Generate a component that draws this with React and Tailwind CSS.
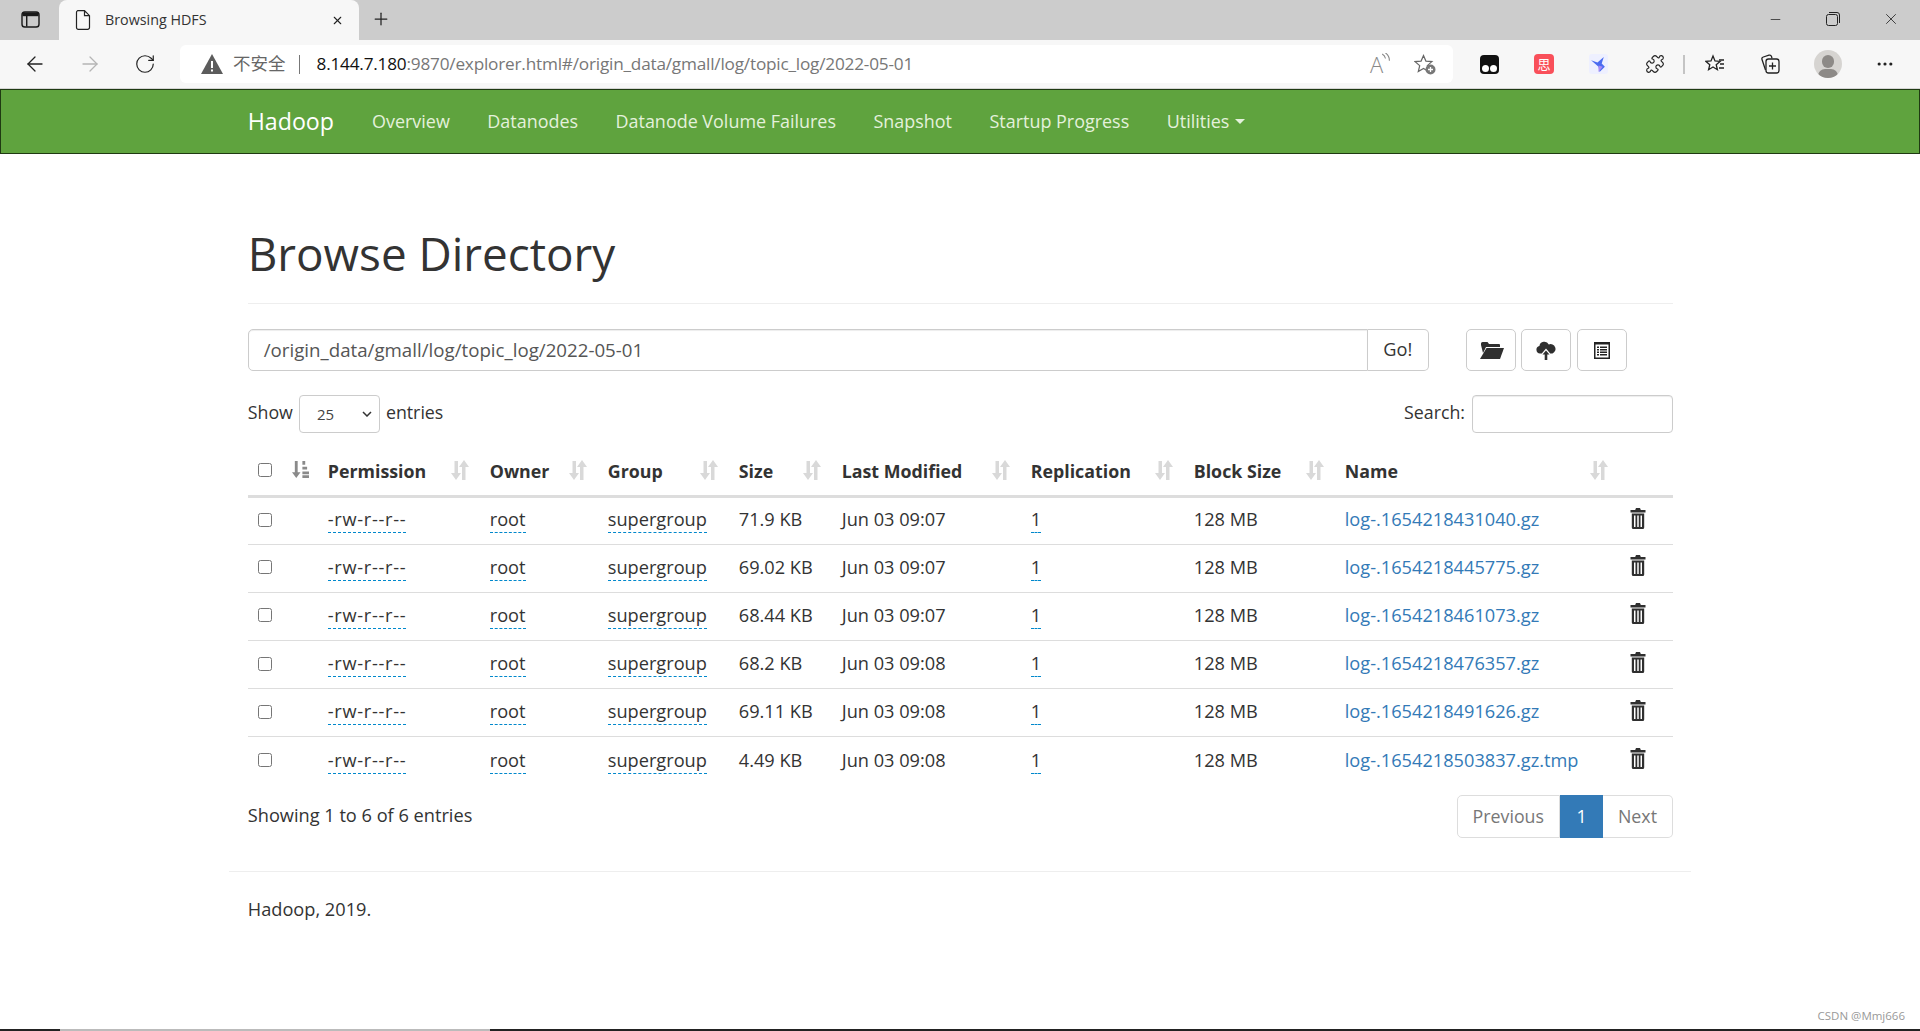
import React from "react";
import { ArrowLeft, ArrowRight, RotateCw, Plus, X, Minus, Puzzle, MoreHorizontal } from "lucide-react";

const FONT = "font-['Open_Sans','Noto_Sans_CJK_SC',sans-serif]";

const rows = [
  ["71.9 KB", "Jun 03 09:07", "log-.1654218431040.gz"],
  ["69.02 KB", "Jun 03 09:07", "log-.1654218445775.gz"],
  ["68.44 KB", "Jun 03 09:07", "log-.1654218461073.gz"],
  ["68.2 KB", "Jun 03 09:08", "log-.1654218476357.gz"],
  ["69.11 KB", "Jun 03 09:08", "log-.1654218491626.gz"],
  ["4.49 KB", "Jun 03 09:08", "log-.1654218503837.gz.tmp"],
];

const cols = [70, 162, 118, 131, 103, 189, 163, 151, 284, 54];
const heads = ["Permission", "Owner", "Group", "Size", "Last Modified", "Replication", "Block Size", "Name"];

function SortIcon({ className = "" }) {
  return (
    <svg viewBox="0 0 18 20" className={`w-[18px] h-[20px] ${className}`} fill="#d9d9d9">
      <path d="M3.500 1h3.500v12h3l-5 7-5-7h3.500z" />
      <path d="M11 20V7H8l5-7 5 7h-3.500v13z" />
    </svg>
  );
}

function SortAttr() {
  return (
    <svg viewBox="0 0 18 20" className="w-[17px] h-[19px]" fill="#8a8a8a">
      <path d="M3 1h3v12h3l-4.500 6L0 13h3z" />
      <path d="M11 1h3v4h-3zM11 7h5v3h-5zM11 12h7v3h-7zM11 16h7v3h-7z" />
    </svg>
  );
}

function Trash() {
  return (
    <svg viewBox="0 0 16 21" className="w-[16px] h-[21px]" fill="#2f2f2f">
      <path d="M6 0h4l.8 2H15.500v2.500H.5V2h4.700z" />
      <path fillRule="evenodd" d="M1.800 5.500h12.400V19.500a1.500 1.500 0 0 1-1.500 1.500H3.300a1.500 1.500 0 0 1-1.500-1.500zM4 7.500v11.500h1.500V7.500zM7.250 7.500v11.500h1.500V7.500zM10.500 7.500v11.500h1.500V7.500z" />
    </svg>
  );
}

function FolderOpen() {
  return (
    <svg viewBox="0 0 24 17" className="w-[24px] h-[17px] translate-x-[1px]" fill="#2f2f2f">
      <path d="M1 3V1.500A1.500 1.500 0 0 1 2.500 0h5L9 2h10a1 1 0 0 1 1 1v2H6L3 11z" />
      <path d="M6.500 6H24l-4 11H0z" />
    </svg>
  );
}

function CloudUp() {
  return (
    <svg viewBox="0 0 20 20" className="w-[20px] h-[20px]" fill="#2f2f2f">
      <path d="M4 13.500a3.800 3.800 0 0 1-.6-7.500A5 5 0 0 1 12.800 4.500 4.500 4.500 0 0 1 16.500 13.500h-2.300L10 8.500l-4.200 5z" />
      <path d="M10 10.500l3.500 4h-2.200V20H8.700v-5.500H6.500z" />
    </svg>
  );
}

function ListAlt() {
  return (
    <svg viewBox="0 0 16 17" className="w-[16px] h-[17px]" fill="#222">
      <path fillRule="evenodd" d="M0 0h16v17H0zM1.500 2.500v13h13v-13zM3 4.500h2v1.500H3zM6 4.500h7v1.500H6zM3 7h2v1.500H3zM6 7h7v1.500H6zM3 9.500h2V11H3zM6 9.500h7V11H6zM3 12h2v1.500H3zM6 12h7v1.500H6z" />
    </svg>
  );
}

function Editable({ children, className = "" }) {
  return <span className={`border-b border-dashed border-[#0088cc] pb-[1px] ${className}`}>{children}</span>;
}

function Checkbox({ className = "" }) {
  return <span className={`block w-[14px] h-[14px] border border-[#767676] rounded-[2.500px] bg-white ${className}`} />;
}

function TabBar() {
  return (
    <div className="flex items-end h-[40px] bg-[#cccccc]">
      <svg viewBox="0 0 20 18" className="ml-[21px] w-[19px] h-[17px] mb-[12px]" fill="none" stroke="#1a1a1a" strokeWidth="1.500">
        <rect x="1" y="1" width="18" height="16" rx="3" />
        <rect x="1.500" y="1.500" width="17" height="4" fill="#1a1a1a" stroke="none" />
        <path d="M6 5v11.500" />
      </svg>
      <div className="ml-[19px] w-[300px] h-[40px] bg-[#f7f7f7] rounded-t-[8px] flex items-center">
        <svg viewBox="0 0 16 20" className="ml-[16px] w-[16px] h-[20px]" fill="none" stroke="#222" strokeWidth="1.200">
          <path d="M2.500.7h7l5 5v11.800a1.800 1.800 0 0 1-1.800 1.800H3.300a1.800 1.800 0 0 1-1.800-1.800V2.500A1.800 1.800 0 0 1 2.500.7zM9.500.7v5h5" />
        </svg>
        <span className="ml-[14px] text-[14.300px] text-[#333] leading-none whitespace-nowrap">Browsing HDFS</span>
        <X size={13} strokeWidth={2} color="#222" className="ml-auto mr-[15px]" />
      </div>
      <Plus size={20} strokeWidth={1.500} color="#222" className="ml-[12px] mb-[11px]" />
      <div className="ml-auto flex items-center self-start h-[38px] text-[#222]">
        <Minus size={15} strokeWidth={1.200} className="mr-[43px]" />
        <svg viewBox="0 0 14 14" className="w-[14px] h-[14px] mr-[42px]" fill="none" stroke="#222" strokeWidth="1">
          <rect x=".5" y="2.500" width="11" height="11" rx="2" />
          <path d="M3 .5h8a2.500 2.500 0 0 1 2.500 2.500v8" />
        </svg>
        <X size={18} strokeWidth={1.100} className="mr-[20px]" />
      </div>
    </div>
  );
}

function AddressBar() {
  return (
    <div className="flex items-center h-[49px] bg-[#f7f7f7] border-b border-[#d5d5d5]">
      <ArrowLeft size={24} strokeWidth={1.300} color="#222" className="ml-[23px]" />
      <ArrowRight size={24} strokeWidth={1.300} color="#b5b5b5" className="ml-[30.500px]" />
      <RotateCw size={22} strokeWidth={1.300} color="#222" className="ml-[32.500px]" />
      <div className="ml-[24px] w-[1273px] h-[38px] bg-white rounded-[6px] flex items-center">
        <svg viewBox="0 0 22 20" className="ml-[21px] w-[22px] h-[20px]">
          <path d="M11 0l11 20H0z" fill="#5c5c5c" />
          <path d="M10 7h2v7h-2zM10 15.500h2v2h-2z" fill="#fff" />
        </svg>
        <span className="ml-[10px] text-[17.500px] text-[#666] leading-none whitespace-nowrap">不安全</span>
        <span className="ml-[13px] w-[1px] h-[19px] bg-[#777]" />
        <span className="ml-[17px] text-[17.200px] tracking-[-0.2px] leading-none whitespace-nowrap text-[#777]">
          <span className="text-[#111]">8.144.7.180</span>:9870/explorer.html#/origin_data/gmall/log/topic_log/2022-05-01
        </span>
        <div className="ml-auto relative w-[20px] h-[20px] mr-[24px] text-[#888]">
          <span className="absolute left-0 top-[-2px] text-[22px] leading-[24px] font-light">A</span>
          <svg viewBox="0 0 8 10" className="absolute right-0 top-[-1px] w-[9px] h-[11px]" fill="none" stroke="#888" strokeWidth="1">
            <path d="M1 1a6 6 0 0 1 3 4M4 0a8 8 0 0 1 3.500 7" />
          </svg>
        </div>
        <svg viewBox="0 0 22 21" className="w-[22px] h-[21px] mr-[17px]">
          <path d="M9.500 1.500l2.400 5.600 6 .5-4.600 4 1.400 5.900-5.200-3.100-5.200 3.100 1.400-5.900-4.600-4 6-.5z" fill="none" stroke="#666" strokeWidth="1.200" />
          <circle cx="16.500" cy="15.500" r="5" fill="#777" />
          <path d="M14 15.500h5M16.500 13v5" stroke="#fff" strokeWidth="1.300" />
        </svg>
      </div>
      <div className="ml-[27px] w-[19px] h-[19px] rounded-[4px] bg-[#111] relative">
        <span className="absolute left-[2px] bottom-[2px] w-[7px] h-[7px] rounded-full bg-white" />
        <span className="absolute right-[2px] bottom-[2px] w-[7px] h-[7px] rounded-full bg-white" />
      </div>
      <div className="ml-[35px] w-[20px] h-[20px] rounded-[4px] bg-[#f9505a] flex items-center justify-center">
        <span className="text-white text-[13px] leading-none">思</span>
      </div>
      <div className="ml-[35px] w-[19px] h-[20px] rounded-[3px] bg-[#eef0ff] flex items-center justify-center">
        <svg viewBox="0 0 16 16" className="w-[17px] h-[17px]">
          <path d="M1 4l6 2 6-5-2 6 3 3-5 5-1-5z" fill="#4b6cf0" />
          <path d="M8 9l4 1-4 5z" fill="#a98bf5" />
        </svg>
      </div>
      <Puzzle size={20} strokeWidth={1.400} color="#222" className="ml-[37px]" />
      <span className="ml-[18px] w-[2px] h-[19px] bg-[#c4c4c4]" />
      <svg viewBox="0 0 20 20" className="ml-[20px] w-[20px] h-[20px]" fill="none" stroke="#222" strokeWidth="1.300">
        <path d="M8 2l2 5 5 .4-3.800 3.300 1.200 5L8 13l-4.400 2.700 1.200-5L1 7.400 6 7z" />
        <path d="M14 6h5M15 10h4M14 14h5" />
      </svg>
      <svg viewBox="0 0 20 20" className="ml-[35px] w-[20px] h-[20px]" fill="none" stroke="#222" strokeWidth="1.300">
        <path d="M5.500 16L2 5.500a2 2 0 0 1 1.300-2.500L9 1.200a2 2 0 0 1 2.500 1.200l.5 2" />
        <rect x="6" y="5" width="13" height="14" rx="2.500" />
        <path d="M12.500 8.500v7M9 12h7" />
      </svg>
      <div className="ml-[34px] w-[28px] h-[28px] rounded-full bg-[#d6d4d1] overflow-hidden relative">
        <span className="absolute left-[8px] top-[5px] w-[12px] h-[13px] rounded-full bg-[#8d8a87]" />
        <span className="absolute left-[4px] top-[19px] w-[20px] h-[14px] rounded-full bg-[#8d8a87]" />
      </div>
      <MoreHorizontal size={20} strokeWidth={1.800} color="#222" className="ml-[33px]" />
    </div>
  );
}

function Navbar() {
  const items = ["Overview", "Datanodes", "Datanode Volume Failures", "Snapshot", "Startup Progress"];
  return (
    <div className="h-[65px] bg-[#5fa33e] border-y-[1.500px] border-x border-[#1f3a12]">
      <div className="w-[1462px] mx-auto px-[18.750px] h-full flex items-center">
        <span className="text-[23.200px] text-white leading-none mr-[38px]">Hadoop</span>
        {items.map((t) => (
          <span key={t} className="text-[17.950px] text-[#e4f1dc] leading-none mr-[37.500px] whitespace-nowrap">{t}</span>
        ))}
        <span className="text-[17.950px] text-[#e4f1dc] leading-none whitespace-nowrap">Utilities</span>
        <span className="ml-[6px] w-0 h-0 border-x-[5px] border-x-transparent border-t-[5px] border-t-[#e4f1dc]" />
      </div>
    </div>
  );
}

function IconBtn({ children, className = "" }) {
  return (
    <div className={`w-[50px] h-[42px] border border-[#cccccc] rounded-[5px] flex items-center justify-center ${className}`}>
      {children}
    </div>
  );
}

function Table() {
  return (
    <table className="w-[1425px] table-fixed border-collapse text-[#333]">
      <colgroup>
        {cols.map((w, i) => (
          <col key={i} style={{ width: w }} />
        ))}
      </colgroup>
      <thead>
        <tr className="h-[48px] border-b-[3px] border-[#dddddd]">
          <th className="relative text-left">
            <Checkbox className="absolute left-[10px] top-[15px]" />
            <span className="absolute left-[44px] top-[12px]"><SortAttr /></span>
          </th>
          {heads.map((h) => (
            <th key={h} className="relative text-left font-bold text-[17.800px] pl-[10px] pt-[1px] whitespace-nowrap">
              {h}
              <SortIcon className="absolute right-[11px] top-[12px]" />
            </th>
          ))}
          <th />
        </tr>
      </thead>
      <tbody>
        {rows.map((r) => (
          <tr key={r[2]} className="h-[48.200px] border-b-[1.500px] border-[#dddddd] last:border-b-0">
            <td className="pl-[10px] pb-[2px]"><Checkbox /></td>
            <td className="pl-[10px] pb-[2px]"><Editable className="tracking-[0.7px]">-rw-r--r--</Editable></td>
            <td className="pl-[10px] pb-[2px]"><Editable>root</Editable></td>
            <td className="pl-[10px] pb-[2px]"><Editable>supergroup</Editable></td>
            <td className="pl-[10px] pb-[2px]">{r[0]}</td>
            <td className="pl-[10px] pb-[2px]">{r[1]}</td>
            <td className="pl-[10px] pb-[2px]"><Editable>1</Editable></td>
            <td className="pl-[10px] pb-[2px]">128 MB</td>
            <td className="pl-[10px] pb-[2px] text-[#337ab7]">{r[2]}</td>
            <td className="pl-[11px] pb-[2px]"><span className="block -mt-[3px]"><Trash /></span></td>
          </tr>
        ))}
      </tbody>
    </table>
  );
}

export default function App() {
  return (
    <div className={`h-[1031px] bg-white relative overflow-hidden text-[#333] text-[18.200px] ${FONT}`}>
      <TabBar />
      <AddressBar />
      <Navbar />
      <div className="w-[1462px] mx-auto">
        <div className="pl-[18.750px] pr-[18px]">
          <div className="pt-[74px] border-b border-[#eeeeee] h-[150px]">
            <h1 className="text-[45.800px] leading-[50px] text-[#333]">Browse Directory</h1>
          </div>
          <div className="mt-[25px] flex">
            <div className="flex w-[1181px]">
              <div className="flex-1 h-[42px] border border-[#cccccc] rounded-l-[5px] px-[15px] pt-[1px] flex items-center text-[18.700px] text-[#555] shadow-[inset_0_1px_1px_rgba(0,0,0,0.075)]">
                /origin_data/gmall/log/topic_log/2022-05-01
              </div>
              <div className="w-[61px] h-[42px] border border-l-0 border-[#cccccc] rounded-r-[5px] flex items-center justify-center">Go!</div>
            </div>
            <div className="ml-[37px] flex gap-[5.500px]">
              <IconBtn><FolderOpen /></IconBtn>
              <IconBtn><CloudUp /></IconBtn>
              <IconBtn><ListAlt /></IconBtn>
            </div>
          </div>
          <div className="mt-[24px] flex items-start justify-between text-[17.800px]">
            <div className="flex items-center">
              <span className="-mt-[3px]">Show</span>
              <div className="ml-[6px] w-[81px] h-[38px] border border-[#cccccc] rounded-[4px] flex items-center pl-[17px] text-[15px] text-[#444]">
                25
                <svg viewBox="0 0 10 6" className="ml-auto mr-[7px] w-[10px] h-[6px]" fill="none" stroke="#333" strokeWidth="1.500"><path d="M1 1l4 4 4-4" /></svg>
              </div>
              <span className="ml-[6px] -mt-[3px]">entries</span>
            </div>
            <div className="flex items-center">
              <span className="-mt-[3px]">Search:</span>
              <div className="ml-[7px] w-[201px] h-[38px] border border-[#cccccc] rounded-[4px] shadow-[inset_0_1px_1px_rgba(0,0,0,0.075)]" />
            </div>
          </div>
          <div className="mt-[15px]"><Table /></div>
          <div className="mt-[10px] flex items-start justify-between">
            <span className="mt-[7px]">Showing 1 to 6 of 6 entries</span>
            <div className="flex h-[43px] items-stretch text-[17.800px]">
              <span className="px-[15px] flex items-center border border-[#dddddd] rounded-l-[5px] text-[#777]">Previous</span>
              <span className="w-[43px] flex items-center justify-center bg-[#337ab7] text-white">1</span>
              <span className="px-[15px] flex items-center border border-l-0 border-[#dddddd] rounded-r-[5px] text-[#777]">Next</span>
            </div>
          </div>
        </div>
        <div className="mt-[33px] border-t border-[#eeeeee] pt-[24px] px-[18.750px]">Hadoop, 2019.</div>
      </div>
      <span className="absolute right-[15px] bottom-[10px] text-[11.500px] text-[#999] leading-none">CSDN @Mmj666</span>
      <div className="absolute bottom-0 inset-x-0 h-[2px] flex">
        <span className="w-[60px] bg-[#222]" />
        <span className="w-[430px] bg-[#bbb]" />
        <span className="flex-1 bg-[#222]" />
      </div>
    </div>
  );
}
